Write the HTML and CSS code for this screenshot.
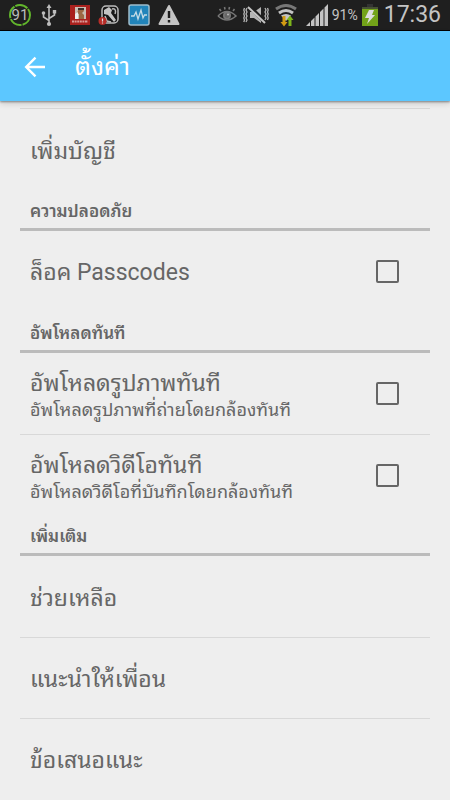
FILE: index.html
```html
<!DOCTYPE html>
<html lang="th">
<head>
<meta charset="utf-8">
<meta name="viewport" content="width=device-width, initial-scale=1">
<title>ตั้งค่า</title>
<link rel="stylesheet" href="styles.css">
</head>
<body>
<div class="status">
  <div class="status-group">
    <svg width="26" height="24" viewBox="0 0 26 24"><circle cx="13" cy="12" r="10" fill="none" stroke="#62b62c" stroke-width="2" stroke-dasharray="13 1"/><text x="13" y="17" text-anchor="middle" class="gauge">91</text></svg>
    <svg width="16" height="24" viewBox="0 0 16 24" fill="none" stroke="#bdbdbd" stroke-width="1.6"><path d="M8 4v17M8 17.500l-5.500-3.500v-4M8 15.500l5.500-3.500V9"/><path d="M8 1l2.500 4h-5z" fill="#bdbdbd" stroke="none"/><circle cx="8" cy="21" r="2.100" fill="#bdbdbd" stroke="none"/><circle cx="2.500" cy="10" r="1.800" fill="#bdbdbd" stroke="none"/><path d="M11.800 7h3.400v3.400h-3.400z" fill="#bdbdbd" stroke="none"/></svg>
    <svg class="app" width="20" height="20" viewBox="0 0 20 20"><path d="M0 0h20v20H0z" fill="#aa211e"/><path d="M5 2h11v12H5z" fill="#c9bdb3"/><path d="M9 3h4l1 3-2 2 2 2v4H9V9l-2-1z" fill="#9b6843"/><path d="M8 3h6v2H8z" fill="#3c302c"/><path d="M5 9l3-2v7H5z" fill="#eee"/><path d="M2 16.500h16" stroke="#d99b98" stroke-width="2" stroke-dasharray="2 .6"/></svg>
    <svg width="22" height="22" viewBox="0 0 22 22"><rect x="4" y="2" width="16" height="17" rx="4" fill="#181818" stroke="#bbb" stroke-width="1.500"/><path d="M6 6l5-3 3 3-1 3 5 7-2 2-6-7-4-1z" fill="#c4c4c4"/><path d="M14 5c4-1 4 3 3 5M7 12l2 5 4 1" fill="none" stroke="#bbb" stroke-width="1.500"/><circle cx="4.500" cy="17" r="4" fill="#b72d28"/><path d="M4.500 14.500v3M4.500 18.500v1" stroke="#ddd" stroke-width="1.200"/></svg>
    <svg width="22" height="22" viewBox="0 0 22 22"><rect x="1" y="1" width="20" height="20" rx="2" fill="#2184ba" stroke="#9dbccb" stroke-width="1.500"/><path d="M3 12h3l2-4 2 7 3-9 2 8 1.500-3H19" fill="none" stroke="#c5dce6" stroke-width="1.300"/></svg>
    <svg width="22" height="22" viewBox="0 0 22 22"><path d="M11 2L20.500 20h-19z" fill="#c4c4c4" stroke="#c4c4c4" stroke-width="2" stroke-linejoin="round"/><path d="M11 7v7M11 16v2.500" stroke="#1c1c1c" stroke-width="2.400"/></svg>
  </div>
  <div class="status-group status-right">
    <svg width="20" height="20" viewBox="0 0 20 20" fill="none" stroke="#777" stroke-width="1.600"><path d="M1 11q9-9 18 0q-9 8-18 0M4 6L2.500 4M8 4.500L7.500 2M12 4.500l.5-2.500M16 6l1.500-2"/><circle cx="10" cy="10.500" r="3.200" fill="#666"/><circle cx="11" cy="9.500" r="1" fill="#bbb" stroke="none"/></svg>
    <svg width="26" height="20" viewBox="0 0 26 20"><path d="M7 7h4l7-5v16l-7-5H7z" fill="#b4b4b4"/><path d="M6 1l17 17" stroke="#1f1f1f" stroke-width="4"/><path d="M5 2l17 16" stroke="#c4c4c4" stroke-width="2"/><path d="M4 3L3 5l1 2-1 2 1 2-1 2 1 2-1 2M1.500 3L.8 5l.7 2-.7 2 .7 2-.7 2 .7 2-.7 2M22 3l1 2-1 2 1 2-1 2 1 2-1 2M24.500 3l.7 2-.7 2 .7 2-.7 2 .7 2-.7 2" fill="none" stroke="#b4b4b4" stroke-width="1.300"/></svg>
    <svg width="22" height="24" viewBox="0 0 22 24" fill="none"><path d="M1 6q10-7 20 0" stroke="#777" stroke-width="3"/><path d="M4 10q7-5 14 0" stroke="#c4c4c4" stroke-width="3"/><path d="M6 12.500q5-3 10 0L11 18z" fill="#c4c4c4"/><path d="M7.500 13h3v6h2L9 23.500 5.500 19h2z" fill="#d29b13"/><path d="M13.500 23v-6h-2l3.500-4.500 3.500 4.500h-2v6z" fill="#7eb51b"/></svg>
    <svg class="signal" width="22" height="22" viewBox="0 0 22 22" fill="#c4c4c4"><path d="M0 22l4-4v4zM5 22v-5l3.500-3.500V22zM9.500 22v-9.500L13 9v13zM14 22V8l3.500-3.500V22zM18.500 22V3.500L22 0v22z"/></svg>
    <span class="battery-text">91%</span>
    <svg width="16" height="24" viewBox="0 0 16 24"><path d="M5 1h6v4H5z" fill="#333"/><path d="M0 4h16v19H0z" fill="#73a319"/><path d="M0 4h16v2H0z" fill="#465134"/><path d="M7 7h5l-2 5h3L5 21l2-6H3z" fill="#ddd"/></svg>
    <time class="clock">17:36</time>
  </div>
</div>
<header class="toolbar">
  <button class="back" type="button" aria-label="กลับ"><svg width="22" height="22" viewBox="0 0 22 22" fill="none" stroke="#fff" stroke-width="2.400"><path d="M21 11H2.500M11.500 1.700L2.200 11l9.300 9.300"/></svg></button>
  <h1>ตั้งค่า</h1>
</header>
<main>
  <a class="row" href="#add">เพิ่มบัญชี</a>
  <h2>ความปลอดภัย</h2>
  <label class="row"><span class="label">ล็อค Passcodes</span><input type="checkbox"></label>
  <h2>อัพโหลดทันที</h2>
  <label class="row"><span class="label">อัพโหลดรูปภาพทันที<small>อัพโหลดรูปภาพที่ถ่ายโดยกล้องทันที</small></span><input type="checkbox"></label>
  <label class="row"><span class="label">อัพโหลดวิดีโอทันที<small>อัพโหลดวิดีโอที่บันทึกโดยกล้องทันที</small></span><input type="checkbox"></label>
  <h2>เพิ่มเติม</h2>
  <a class="row" href="#help">ช่วยเหลือ</a>
  <a class="row" href="#share">แนะนำให้เพื่อน</a>
  <a class="row" href="#feedback">ข้อเสนอแนะ</a>
</main>
</body>
</html>
```
FILE: styles.css
```css
* { box-sizing: border-box; }
body {
  margin: 0;
  background: #eee;
  color: #666;
  font-family: Roboto, "Droid Sans Thai", "Noto Sans Thai Looped", "Noto Looped Thai", Waree, Loma, Garuda, "Noto Sans Thai", "Noto Sans", sans-serif;
  overflow: hidden;
}
svg { display: block; flex: none; }
.status {
  display: flex;
  justify-content: space-between;
  height: 31px;
  padding: 0 9px 0 7px;
  background: #1f1f1f;
  border-bottom: 1px solid #000;
  color: #c4c4c4;
}
.status-group { display: flex; align-items: center; gap: 8px; }
.status-group .app { margin-left: 5px; }
.status-right { gap: 6px; }
.signal { margin-left: 3px; }
.gauge { fill: #bcbcbc; font-size: 15px; }
.battery-text { font-size: 14px; margin: 0 -2px; }
.clock { font-size: 23px; line-height: 30px; }
.toolbar {
  position: relative;
  display: flex;
  align-items: center;
  gap: 29px;
  height: 70px;
  padding: 2px 24px 0;
  background: #5cc7ff;
  color: #fff;
  box-shadow: 0 1px 2px #0006, 0 3px 6px #0002;
}
.back { padding: 0; border: 0; background: none; }
h1 { margin: 0; font-size: 25px; font-weight: 400; line-height: 40px; }
main { padding: 7px 20px 0; }
.row {
  display: flex;
  align-items: center;
  height: 81px;
  padding: 0 31px 0 10px;
  color: inherit;
  font-size: 23px;
  line-height: 30px;
  text-decoration: none;
}
.row:first-child, .row + .row { border-top: 1px solid #d8d8d8; }
.row:first-child { height: 82px; }
a.row { padding-top: 4px; }
.label { flex: 1; padding-top: 3px; }
small { display: block; font-size: 18px; line-height: 22px; }
input {
  appearance: none;
  width: 23px;
  height: 23px;
  margin: 0;
  border: 2px solid #666;
  border-radius: 2px;
}
h2 {
  height: 41px;
  margin: 0;
  padding: 0 10px;
  border-bottom: 3px solid #bbb;
  font-size: 17px;
  font-weight: 600;
  line-height: 42px;
}
```
